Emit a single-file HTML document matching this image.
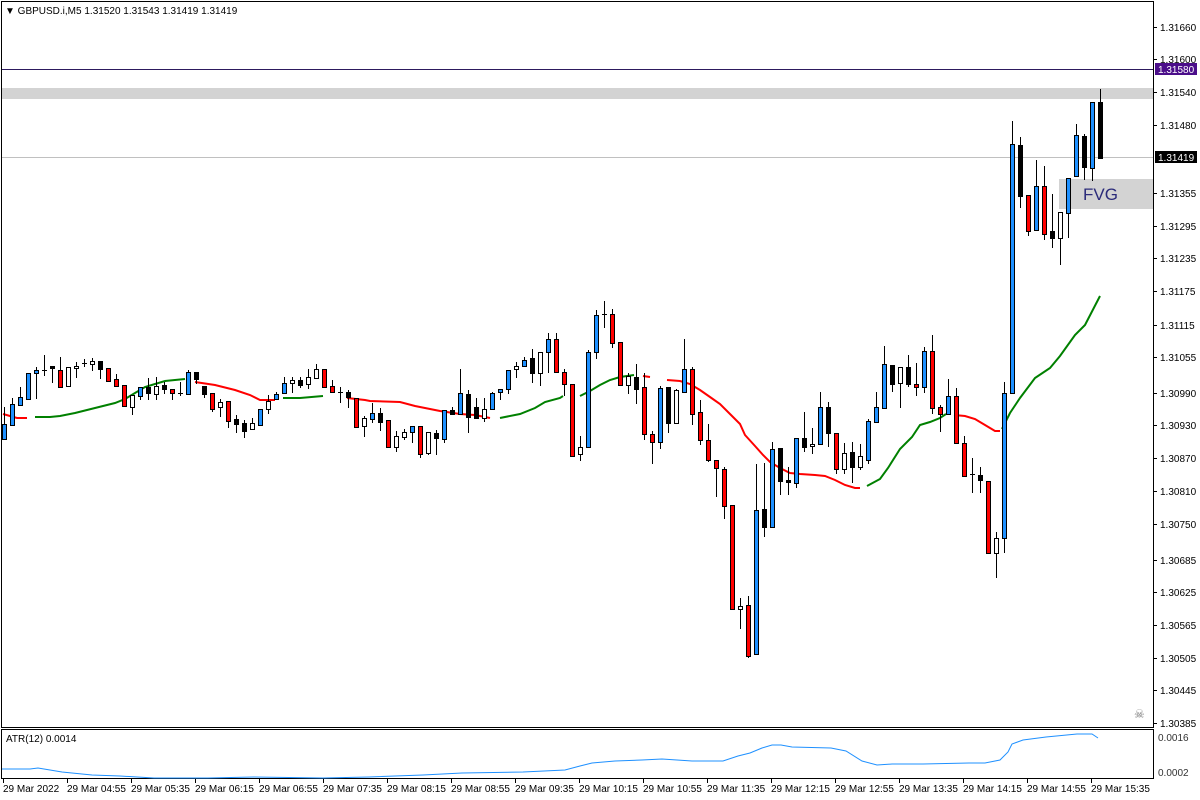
<!DOCTYPE html>
<html><head><meta charset="utf-8"><style>
html,body{margin:0;padding:0;background:#fff;}
svg{display:block;font-family:"Liberation Sans",sans-serif;}
</style></head><body>
<svg id="s" width="1200" height="800" xmlns="http://www.w3.org/2000/svg" shape-rendering="crispEdges">
<rect width="1200" height="800" fill="#fff"/>
<rect x="2" y="88" width="1151" height="11" fill="#d3d3d3"/>
<rect x="1059" y="179" width="94" height="30" fill="#d3d3d3"/>
<text x="1083" y="200" font-size="17" fill="#2b2b7a" shape-rendering="auto">FVG</text>
<line x1="2" y1="157.5" x2="1153" y2="157.5" stroke="#c0c0c0"/>
<line x1="2" y1="69.5" x2="1153" y2="69.5" stroke="#2d1a5e"/>
<g id="ma" fill="none" stroke-width="2" shape-rendering="auto">
<polyline stroke="#ff0000" points="3,414 10,416 17,418 27,418"/>
<polyline stroke="#008000" points="35,417 50,417 60,416 75,413 95,408 115,403 125,399 135,393 145,387 155,384 165,381 185,379"/>
<polyline stroke="#ff0000" points="195,382 215,385 235,390 250,395 260,400 275,400"/>
<polyline stroke="#008000" points="283,398 300,398 323,396"/>
<polyline stroke="#ff0000" points="347,398 365,400 370,401 400,402 415,406 425,408 440,411 460,414 475,415 490,418"/>
<polyline stroke="#008000" points="500,418 520,414 535,408 545,402 560,398 563,396"/>
<polyline stroke="#008000" points="580,396 590,391 600,385 610,380 620,377 634,375"/>
<polyline stroke="#ff0000" points="643,376 650,377"/>
<polyline stroke="#ff0000" points="667,380 680,381 690,384 700,390 710,397 720,404 730,414 740,424 745,435 755,446 763,455 770,462 780,468 790,473 800,474 815,475 825,476 835,480 845,485 855,488 860,488"/>
<polyline stroke="#008000" points="867,486 880,479 888,468 900,449 912,437 920,425 930,422 940,418 946,414"/>
<polyline stroke="#ff0000" points="954,415 965,416 975,419 985,425 995,431 1000,431"/>
<polyline stroke="#008000" points="1002,429 1010,413 1020,398 1035,378 1050,368 1060,356 1075,335 1085,325 1100,296"/>
</g>
<g id="c"></g>
<rect x="1.5" y="1.5" width="1152" height="726" fill="none" stroke="#000"/>
<rect x="1.5" y="729.5" width="1152" height="49" fill="none" stroke="#000"/>
<g font-size="10" fill="#000" id="pa" shape-rendering="auto">
<text x="1160" y="31">1.31660</text>
<text x="1160" y="63">1.31600</text>
<text x="1160" y="96">1.31540</text>
<text x="1160" y="129">1.31480</text>
<text x="1160" y="197">1.31355</text>
<text x="1160" y="230">1.31295</text>
<text x="1160" y="262">1.31235</text>
<text x="1160" y="295">1.31175</text>
<text x="1160" y="329">1.31115</text>
<text x="1160" y="361">1.31055</text>
<text x="1160" y="397">1.30990</text>
<text x="1160" y="429">1.30930</text>
<text x="1160" y="462">1.30870</text>
<text x="1160" y="495">1.30810</text>
<text x="1160" y="528">1.30750</text>
<text x="1160" y="564">1.30685</text>
<text x="1160" y="596">1.30625</text>
<text x="1160" y="629">1.30565</text>
<text x="1160" y="662">1.30505</text>
<text x="1160" y="694">1.30445</text>
<text x="1160" y="727">1.30385</text>
</g>
<rect x="1155" y="63" width="42" height="12" fill="#4b0e8a"/>
<text x="1158" y="73" font-size="10" fill="#fff">1.31580</text>
<rect x="1155" y="151" width="42" height="12" fill="#000"/>
<text x="1158" y="161" font-size="10" fill="#fff">1.31419</text>
<text x="1134" y="718" font-size="12" fill="#777">☠</text>
<text x="5" y="14" font-size="10" fill="#000">▼  GBPUSD.i,M5  1.31520 1.31543 1.31419 1.31419</text>
<text x="6" y="742" font-size="10" fill="#000">ATR(12) 0.0014</text>
<text x="1158" y="741" font-size="10" fill="#333">0.0016</text>
<text x="1158" y="776" font-size="10" fill="#333">0.0002</text>
<polyline fill="none" stroke="#1e90ff" stroke-width="1" shape-rendering="auto" points="2,769 30,769 38,768 50,770 62,772 92,775 120,776 154,778 208,778 254,777 323,778 369,777 423,775 462,773 523,772 565,770 580,766 592,763 615,761 642,760 662,759 692,761 723,761 738,756 750,753 762,748 772,745 781,745 792,747 831,748 846,751 862,761 877,765 892,764 923,764 969,763 985,763 1000,760 1008,752 1012,744 1023,740 1046,737 1077,734 1092,734 1098,738"/>
<g id="ta" font-size="10" fill="#000">
<text x="3" y="792">29 Mar 2022</text>
<text x="67" y="792">29 Mar 04:55</text>
<text x="131" y="792">29 Mar 05:35</text>
<text x="195" y="792">29 Mar 06:15</text>
<text x="259" y="792">29 Mar 06:55</text>
<text x="323" y="792">29 Mar 07:35</text>
<text x="387" y="792">29 Mar 08:15</text>
<text x="451" y="792">29 Mar 08:55</text>
<text x="515" y="792">29 Mar 09:35</text>
<text x="579" y="792">29 Mar 10:15</text>
<text x="643" y="792">29 Mar 10:55</text>
<text x="707" y="792">29 Mar 11:35</text>
<text x="771" y="792">29 Mar 12:15</text>
<text x="835" y="792">29 Mar 12:55</text>
<text x="899" y="792">29 Mar 13:35</text>
<text x="963" y="792">29 Mar 14:15</text>
<text x="1027" y="792">29 Mar 14:55</text>
<text x="1091" y="792">29 Mar 15:35</text>
</g>
</svg>
<script>
(function(){
var NS='http://www.w3.org/2000/svg';
function el(parent,tag,attrs){var e=document.createElementNS(NS,tag);for(var k in attrs)e.setAttribute(k,attrs[k]);parent.appendChild(e);return e;}
var D=[
['b',424,439,407,439],['b',404,425,398,425],['b',397,405,387,405],['b',373,399,373,399],['b',370,373,367,398],
['x',370,370,355,375],['k',366,368,366,382],['r',370,387,357,387],['w',367,386,367,386],['w',366,368,362,377],
['x',363,363,359,366],['w',361,364,358,370],['k',361,369,361,378],['r',368,381,368,381],['r',379,386,374,386],
['r',385,406,385,406],['w',395,407,395,414],['b',387,396,387,399],['k',387,393,378,399],['w',386,394,377,399],
['k',385,389,382,393],['r',389,393,389,399],['x',393,393,382,395],['b',372,394,370,394],['k',372,379,372,383],
['k',386,394,386,397],['r',393,409,393,411],['w',402,407,399,416],['r',401,421,401,427],['k',419,424,415,432],
['k',423,431,420,437],['w',423,429,418,429],['b',409,425,409,425],['w',401,409,395,413],['b',394,399,392,399],
['b',383,393,377,393],['w',380,383,377,392],['k',380,385,377,387],['w',377,384,369,388],['w',369,378,364,378],
['r',369,387,369,387],['r',386,392,380,392],['x',392,392,387,402],['k',392,397,390,407],['r',398,427,398,427],
['w',418,426,416,436],['b',413,419,403,422],['k',413,422,408,430],['r',420,447,420,447],['w',436,447,431,451],
['w',432,437,429,439],['b',426,432,426,442],['r',426,454,426,457],['w',432,453,432,454],['k',433,438,430,454],
['b',410,439,410,442],['k',410,414,407,414],['b',393,414,369,414],['k',394,417,390,432],['k',407,418,398,418],
['w',409,418,398,421],['b',393,409,392,409],['b',389,392,389,399],['b',370,389,370,393],['w',366,369,362,377],
['b',360,366,357,366],['k',358,373,349,382],['w',352,373,352,385],['b',339,352,333,372],['r',339,372,333,372],
['r',372,384,369,395],['r',384,456,384,456],['w',447,454,436,460],['b',352,447,350,447],['b',315,352,310,358],
['x',314,314,301,327],['r',314,343,309,347],['r',342,385,342,385],['w',376,385,373,393],['k',377,389,364,403],
['r',387,434,373,439],['r',434,442,431,463],['b',388,442,386,448],['k',387,423,387,432],['w',390,423,389,423],
['b',369,392,339,392],['r',369,414,367,424],['r',412,440,400,444],['r',440,460,424,461],['r',460,468,460,496],
['r',469,506,467,518],['r',505,609,505,609],['w',606,609,598,628],['r',605,656,596,657],['b',510,654,464,654],
['k',509,527,463,536],['b',449,527,442,527],['k',448,481,448,494],['k',480,482,467,494],['b',438,483,438,487],
['k',438,447,412,451],['w',444,446,428,453],['b',407,444,392,444],['k',407,433,402,446],['r',433,469,433,473],
['w',453,469,443,473],['k',452,467,442,482],['w',456,467,444,469],['b',421,460,419,463],['b',407,422,392,422],
['b',364,408,346,408],['k',365,384,365,391],['w',367,383,367,407],['k',367,384,355,386],['r',384,387,363,395],
['b',351,387,347,392],['r',351,408,335,413],['r',407,414,405,431],['b',396,414,379,414],['r',396,443,388,443],
['r',443,476,436,476],['x',474,474,458,492],['k',475,480,467,492],['r',481,553,481,553],['w',538,553,532,577],
['b',393,538,382,552],['b',144,393,121,393],['k',145,196,137,207],['r',195,231,195,235],['b',186,230,160,230],
['r',186,234,166,239],['k',231,238,194,247],['w',212,238,212,264],['b',178,213,178,237],['b',135,176,124,176],
['k',136,167,134,179],['b',102,168,102,180],['k',102,158,89,158]];
var col={b:'#1e90ff',r:'#ff0000',w:'#ffffff',k:'#000000'};
var g=document.getElementById('c');
for(var i=0;i<D.length;i++){var d=D[i],x=4+8*i;
el(g,'line',{x1:x+.5,y1:d[3],x2:x+.5,y2:d[4]+1,stroke:'#000'});
if(d[0]=='x'){el(g,'line',{x1:x-2,y1:d[1]+.5,x2:x+3,y2:d[1]+.5,stroke:'#000'});}
else{var hh=Math.max(d[2]-d[1],1);el(g,'rect',{x:x-1.5,y:d[1]+.5,width:4,height:hh,fill:col[d[0]],stroke:'#000'});}}
var ta=document.getElementById('ta');
for(var k=0;k<18;k++){var xx=3+64*k;el(ta,'line',{x1:xx+.5,y1:779,x2:xx+.5,y2:783,stroke:'#000'});}
var pa=document.getElementById('pa');
var ys=[27,59,92,125,193,226,258,291,325,357,393,425,458,491,524,560,592,625,658,690,723];
for(var j=0;j<ys.length;j++)el(pa,'line',{x1:1153,y1:ys[j]+.5,x2:1157,y2:ys[j]+.5,stroke:'#000'});
})();
</script>
</body></html>
